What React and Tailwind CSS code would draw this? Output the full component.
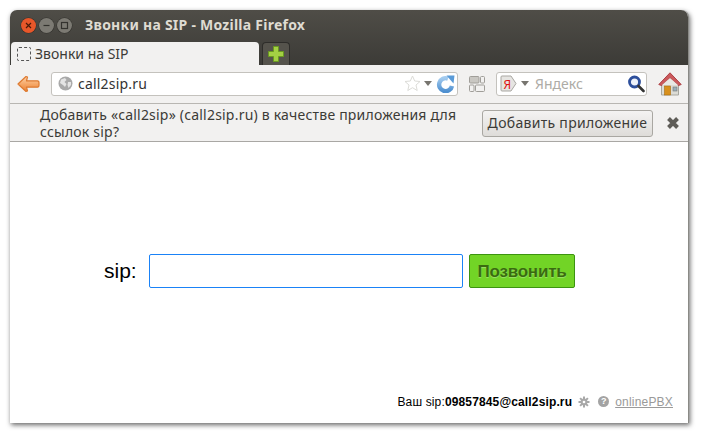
const uiFont = { fontFamily: '"Noto Sans", "Open Sans", sans-serif' };

function WindowButton({ color, children }) {
  return (
    <div className={`w-[15px] h-[15px] shrink-0 rounded-full flex items-center justify-center shadow-[0_0_0_0.5px_#33322e] ${color}`}>
      <svg width="9" height="9" viewBox="0 0 9 9">{children}</svg>
    </div>
  );
}

function BackArrow() {
  return (
    <svg width="23" height="18" viewBox="0 0 23 18">
      <defs>
        <linearGradient id="arrowFill" x1="0" y1="0" x2="0" y2="1">
          <stop offset="0" stopColor="#fbd3ad" />
          <stop offset="0.5" stopColor="#f6a868" />
          <stop offset="1" stopColor="#ea8235" />
        </linearGradient>
      </defs>
      <path d="M1 9 L9 1.5 L10.5 2 L9.5 5.8 L20.5 5.8 Q22 5.8 22 8 L22 10 Q22 12.2 20.5 12.2 L9.5 12.2 L10.5 16 L9 16.5 Z" fill="url(#arrowFill)" stroke="#de7a30" strokeWidth="1.2" strokeLinejoin="round" />
    </svg>
  );
}

function Globe() {
  return (
    <svg width="15" height="15" viewBox="0 0 15 15">
      <circle cx="7.5" cy="7.5" r="7" fill="#a9a9a9" />
      <path d="M3 3.5 L7 2 L8.5 4 L6.5 6 L8.5 8 L7 11 L5 9 L2 7 Z M10 6 L13 6 L13 9 L10.5 12 L9.5 9 Z" fill="#e4e4e4" />
    </svg>
  );
}

function Reload() {
  return (
    <svg width="20" height="18" viewBox="0 0 20 18">
      <defs>
        <linearGradient id="reloadFill" x1="0" y1="0" x2="0" y2="1">
          <stop offset="0" stopColor="#a3cbef" />
          <stop offset="1" stopColor="#4f90d0" />
        </linearGradient>
      </defs>
      <path d="M16 11 A6.5 6.5 0 1 1 12 3.6" fill="none" stroke="url(#reloadFill)" strokeWidth="4.4" />
      <path d="M10.5 0.5 L18.5 0.5 L17.5 8.5 Z" fill="#5a9bd8" />
    </svg>
  );
}

function GridIcon() {
  return (
    <svg width="16" height="16" viewBox="0 0 16 16">
      <rect x="0.5" y="0.5" width="9.5" height="6.5" rx="1" fill="#c9c7c2" stroke="#a09e99" />
      <rect x="11.5" y="0.5" width="4" height="6.5" rx="1" fill="none" stroke="#a09e99" />
      <rect x="0.5" y="9" width="4.5" height="6.5" rx="1" fill="none" stroke="#a09e99" />
      <rect x="6.5" y="9" width="9" height="6.5" rx="1" fill="none" stroke="#a09e99" />
    </svg>
  );
}

function HomeIcon() {
  return (
    <svg width="24" height="24" viewBox="0 0 24 24">
      <path d="M3.5 11 L20.5 11 L20.5 23 L3.5 23 Z" fill="#dcdcd6" stroke="#a8a8a0" />
      <path d="M0.8 12.5 L12 0.8 L23.2 12.5 L20.5 13.5 L12 6 L3.5 13.5 Z" fill="#cb5a5c" stroke="#ad4044" strokeLinejoin="round" />
      <path d="M12 6 L20 13 L4 13 Z" fill="#e9e9e4" />
      <rect x="6.5" y="14" width="6" height="9" fill="#d8901c" stroke="#a86c10" strokeWidth="0.6" />
      <rect x="15" y="15" width="4" height="4" fill="#9ab0b8" stroke="#777" strokeWidth="0.6" />
    </svg>
  );
}

function Magnifier() {
  return (
    <svg width="18" height="18" viewBox="0 0 18 18">
      <circle cx="7.5" cy="7" r="5" fill="#eef2fa" stroke="#2d4f9c" strokeWidth="2.8" />
      <path d="M11.5 11 L16.5 16" stroke="#333" strokeWidth="2.6" strokeLinecap="round" />
    </svg>
  );
}

function Gear() {
  return (
    <svg width="12" height="12" viewBox="0 0 12 12" className="ml-[6px] mt-[1px] shrink-0">
      <path d="M6 0.5 V11.5 M0.5 6 H11.5 M2.1 2.1 L9.9 9.9 M9.9 2.1 L2.1 9.9" stroke="#a8a8a8" strokeWidth="2" />
      <circle cx="6" cy="6" r="3.4" fill="#a8a8a8" />
      <circle cx="6" cy="6" r="1.3" fill="#fff" />
    </svg>
  );
}

export default function App() {
  return (
    <div className="w-[701px] h-[434px] bg-white pt-[10px] pl-[10px] overflow-hidden">
      <div className="w-[679px] h-[413px] flex flex-col rounded-t-[7px] bg-white shadow-[1px_2px_5px_rgba(0,0,0,0.6)] border-r border-[#8a8a86]" style={uiFont}>
        {/* title bar and tab strip */}
        <div className="h-[55px] rounded-t-[7px] bg-gradient-to-b from-[#4f4d47] to-[#3c3b37] flex flex-col shrink-0">
          <div className="h-[32px] flex items-center pl-[11px] pb-[1px]">
            <div className="flex gap-[3px]">
              <WindowButton color="bg-[#e8572a]">
                <path d="M2 2 L7 7 M7 2 L2 7" stroke="#4a1a08" strokeWidth="1.2" />
              </WindowButton>
              <WindowButton color="bg-[#7c7a73]">
                <path d="M1.5 4.5 L7.5 4.5" stroke="#33322e" strokeWidth="1.2" />
              </WindowButton>
              <WindowButton color="bg-[#7c7a73]">
                <rect x="1.5" y="1.5" width="6" height="6" fill="none" stroke="#33322e" strokeWidth="1.2" />
              </WindowButton>
            </div>
            <span className="ml-[13px] -mt-[2px] text-[14px] font-bold text-[#dfdbd2] leading-none tracking-[0.25px]">Звонки на SIP - Mozilla Firefox</span>
          </div>
          <div className="h-[23px] flex items-end pl-[1px] gap-[3px]">
            <div className="w-[248px] h-[23px] bg-[#f2f1f0] rounded-t-[4px] flex items-center pl-[6px]">
              <div className="w-[14px] h-[14px] rounded-[2px] border border-dashed border-[#555]" />
              <span className="ml-[4px] text-[14px] text-[#3c3b37] leading-none">Звонки на SIP</span>
            </div>
            <div className="w-[28px] h-[23px] bg-[#55534c] rounded-t-[4px] border border-b-0 border-[#2e2d2a] flex items-center justify-center">
              <svg width="16" height="16" viewBox="0 0 16 16">
                <path d="M5.5 0.5 H10.5 V5.5 H15.5 V10.5 H10.5 V15.5 H5.5 V10.5 H0.5 V5.5 H5.5 Z" fill="#a4d044" stroke="#6a9a20" />
              </svg>
            </div>
          </div>
        </div>

        {/* navigation bar */}
        <div className="h-[39px] bg-[#f2f1f0] flex items-center pl-[7px] pb-[1px] shrink-0 border-b border-[#b8b6b2]">
          <BackArrow />
          <div className="ml-[11px] w-[407px] h-[24px] bg-white border border-[#c4c2bd] rounded-[3px] flex items-center pl-[6px] pr-[1px]">
            <Globe />
            <span className="ml-[5px] text-[14px] text-[#333] leading-none tracking-[0.2px] mt-[1px]">call2sip.ru</span>
            <div className="ml-auto flex items-center">
              <svg width="17" height="17" viewBox="0 0 17 17">
                <path d="M8.5 1 L10.7 6 L16 6.5 L12 10 L13.2 15.5 L8.5 12.7 L3.8 15.5 L5 10 L1 6.5 L6.3 6 Z" fill="#fff" stroke="#dcdcd8" />
              </svg>
              <div className="ml-[3px] w-0 h-0 border-l-[4px] border-r-[4px] border-t-[5px] border-l-transparent border-r-transparent border-t-[#77756f]" />
              <div className="ml-[4px]"><Reload /></div>
            </div>
          </div>
          <div className="ml-[11px]"><GridIcon /></div>
          <div className="ml-[11px] w-[151px] h-[24px] bg-white border border-[#c4c2bd] rounded-[3px] flex items-center pl-[3px] pr-[1px]">
            <svg width="17" height="17" viewBox="0 0 17 17" className="shrink-0">
              <path d="M1 2 Q1 1 2 1 L11 1 L16 8.5 L11 16 L2 16 Q1 16 1 15 Z" fill="#e6e5e2" stroke="#a9a7a2" />
              <text x="3.5" y="13.5" fontSize="12" fill="#e01010">Я</text>
            </svg>
            <div className="ml-[4px] w-0 h-0 border-l-[4px] border-r-[4px] border-t-[5px] border-l-transparent border-r-transparent border-t-[#77756f]" />
            <span className="ml-[6px] text-[14px] text-[#adaba6] leading-none mt-[1px]">Яндекс</span>
            <div className="ml-auto"><Magnifier /></div>
          </div>
          <div className="ml-[11px]"><HomeIcon /></div>
        </div>

        {/* add application prompt */}
        <div className="h-[38px] bg-[#f2f1f0] border-b border-[#a9a7a4] flex items-center pl-[30px] shrink-0">
          <p className="w-[430px] text-[14px] leading-[17px] text-[#3c3b37] tracking-[0.21px]">Добавить «call2sip» (call2sip.ru) в качестве приложения для ссылок sip?</p>
          <button className="ml-[12px] mt-[1px] w-[171px] h-[27px] rounded-[3px] border border-[#a9a7a2] bg-gradient-to-b from-[#f4f3f2] to-[#dedcd9] text-[14px] text-[#3c3b37] leading-none tracking-[0.3px]"><span className="underline">Д</span>обавить приложение</button>
          <svg className="ml-[13px] mt-[1px]" width="14" height="14" viewBox="0 0 14 14">
            <path d="M2.5 2.5 L11.5 11.5 M11.5 2.5 L2.5 11.5" stroke="#5f5d58" strokeWidth="4" />
          </svg>
        </div>

        {/* page content */}
        <div className="flex-1 flex flex-col" style={{ fontFamily: '"Liberation Sans", Arial, sans-serif' }}>
          <div className="h-[146px] flex items-end pl-[94px]">
            <div className="flex items-center">
              <span className="w-[45px] text-[21px] text-black leading-none pb-[1px]">sip:</span>
              <input className="w-[314px] h-[34px] bg-white border border-[#1a82f7] rounded-[2px] outline-none" />
              <button className="ml-[6px] w-[106px] h-[34px] bg-[#72d426] border border-[#3c9410] rounded-[2px] text-[17px] font-bold text-[#3a6b10] leading-none tracking-[-0.2px] [text-shadow:0_1px_1px_rgba(255,255,255,0.3)]">Позвонить</button>
            </div>
          </div>
          <div className="mt-auto h-[28px] flex items-start justify-end pr-[15px] text-[12px] leading-[14px] text-black">
            <span className="tracking-[0.14px]">Ваш sip:<b>09857845@call2sip.ru</b></span>
            <Gear />
            <div className="ml-[8px] mt-[1px] w-[11px] h-[11px] rounded-full bg-[#a3a3a3] text-white text-[9px] font-bold leading-[11px] text-center">?</div>
            <a className="ml-[6px] text-[#9a9a9a] underline tracking-[0.2px]">onlinePBX</a>
          </div>
        </div>
      </div>
    </div>
  );
}
